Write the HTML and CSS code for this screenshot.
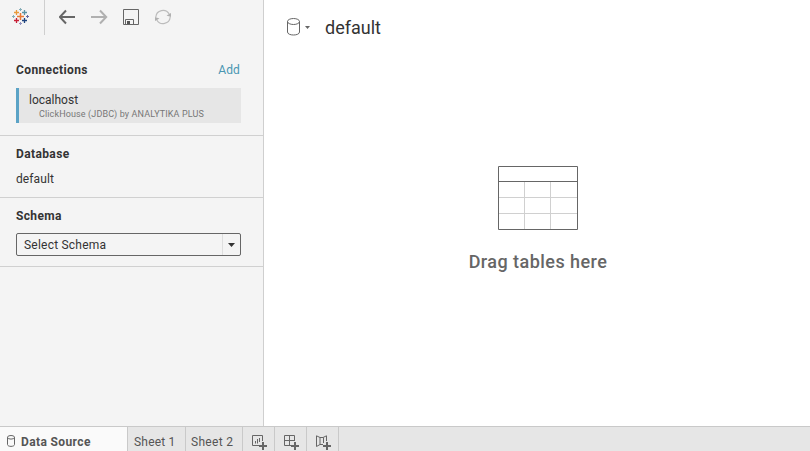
FILE: index.html
```html
<!DOCTYPE html>
<html lang="en">
<head>
<meta charset="utf-8">
<title>Data Source</title>
<link rel="stylesheet" href="styles.css">
</head>
<body>
<div class="workspace">
  <aside class="sidebar">
    <div class="toolbar">
      <svg class="logo" width="18" height="18" viewBox="0 0 18 18" fill="none">
        <path d="M8.5 5V12M5 8.5H12" stroke="#eb7733" stroke-width="1.5"/>
        <path d="M4.5 2V7M2 4.5H7" stroke="#e99a3c" stroke-width="1.3"/>
        <path d="M12.5 2V7M10 4.5H15" stroke="#5b92a5" stroke-width="1.3"/>
        <path d="M4.5 10V15M2 12.5H7" stroke="#c72037" stroke-width="1.3"/>
        <path d="M12.5 10V15M10 12.5H15" stroke="#1f447e" stroke-width="1.3"/>
        <path d="M8.5 0V3M7 1.5H10M1.5 7V10M0 8.5H3" stroke="#86aeb8"/>
        <path d="M15.5 7V10M14 8.5H17" stroke="#6868a0"/>
        <path d="M8.5 14V17M7 15.5H10" stroke="#9494be"/>
      </svg>
      <svg class="icon back" width="18" height="16" viewBox="0 0 18 16" fill="none" stroke="#666" stroke-width="2"><path d="M16 8H1M7 1.5.8 8 7 14.5"/></svg>
      <svg class="icon forward" width="18" height="16" viewBox="0 0 18 16" fill="none" stroke="#b0b0b0" stroke-width="2"><path d="M0 8H15M9 1.5 15.2 8 9 14.5"/></svg>
      <svg class="icon save" width="16" height="16" viewBox="0 0 16 16" fill="none" stroke="#666"><path d="M.5.5H15.5V15.5H.5ZM2.5 15V10.5H10.5V15"/><path d="M4 12H7V15H4Z" fill="#555" stroke="none"/></svg>
      <svg class="icon refresh" width="18" height="16" viewBox="0 0 18 16" fill="none" stroke="#bcbcbc" stroke-width="1.2"><path d="M1.8 8A7.2 7.2 0 0 1 15.2 5M16.2 8A7.2 7.2 0 0 1 2.8 11"/><path d="M12.5 6.5 17 8V4ZM1 8V12L5.5 9.5Z" fill="#b0b0b0" stroke="none"/></svg>
    </div>
    <section class="section connections">
      <div class="heading-row"><h2 class="heading t-connections">Connections</h2><a class="add">Add</a></div>
      <div class="connection">
        <div class="connection-name">localhost</div>
        <div class="connection-type">ClickHouse (JDBC) by ANALYTIKA PLUS</div>
      </div>
    </section>
    <section class="section database">
      <h2 class="heading t-database">Database</h2>
      <div class="value">default</div>
    </section>
    <section class="section schema">
      <h2 class="heading t-schema">Schema</h2>
      <div class="select"><span class="select-text">Select Schema</span><span class="select-arrow"><svg width="7" height="4" viewBox="0 0 7 4"><path d="M0 0H7L3.5 4Z" fill="#333"/></svg></span></div>
    </section>
  </aside>
  <main class="canvas">
    <header class="source">
      <svg width="14" height="18" viewBox="0 0 14 18" fill="none" stroke="#666"><ellipse cx="6.5" cy="3.5" rx="6" ry="3"/><path d="M.5 3.5V14C.5 18 12.5 18 12.5 14V3.5"/></svg>
      <svg class="source-caret" width="5" height="3" viewBox="0 0 5 3"><path d="M0 0H5L2.5 3Z" fill="#666"/></svg>
      <h1 class="source-name">default</h1>
    </header>
    <div class="dropzone">
      <svg width="80" height="64" viewBox="0 0 80 64" fill="none"><path d="M26.5 16V63M52.5 16V63M1 31.5H79M1 47.5H79" stroke="#d0d0d0"/><path d="M.5.5H79.5V63.5H.5ZM.5 15.5H79.5" stroke="#666"/></svg>
      <div class="drag-label">Drag tables here</div>
    </div>
  </main>
</div>
<footer class="tabs">
  <div class="tab active"><svg width="8" height="12" viewBox="0 0 8 12" fill="none" stroke="#666"><ellipse cx="4" cy="2.3" rx="3.5" ry="1.8"/><path d="M.5 2.3V9.5C.5 12 7.5 12 7.5 9.5V2.3"/></svg><span class="t-source">Data Source</span></div>
  <div class="tab sheet-one"><span>Sheet 1</span></div>
  <div class="tab sheet-two"><span>Sheet 2</span></div>
  <div class="tab new"><svg width="16" height="16" viewBox="0 0 16 16" fill="none" stroke="#666"><path d="M7 10.5H.5V.5H10.5V6M3.5 8.5V6M5.5 8.5V4M7.5 7V3"/><path d="M11 7V15M7 11H15" stroke-width="2"/></svg></div>
  <div class="tab new"><svg width="16" height="16" viewBox="0 0 16 16" fill="none" stroke="#666"><path d="M7 10.5H.5V.5H10.5V6M5.5.5V10.5M.5 5.5H10.5"/><path d="M11 7V15M7 11H15" stroke-width="2"/></svg></div>
  <div class="tab new"><svg width="16" height="16" viewBox="0 0 16 16" fill="none" stroke="#666"><path d="M7 9.5H4L.5 11.5V.8L4 2.5H7L10.5.8V6M4 2.5V9.5M7.5 2.5V8"/><path d="M11 7V15M7 11H15" stroke-width="2"/></svg></div>
</footer>
</body>
</html>
```
FILE: styles.css
```css
* { box-sizing: border-box; }
body {
  margin: 0;
  height: 451px;
  overflow: hidden;
  display: flex;
  flex-direction: column;
  font: 12px/16px Roboto, "Liberation Sans", sans-serif;
  color: #333;
  background: #fff;
}
svg { display: block; flex: none; }
h1, h2 { margin: 0; }
.workspace { display: flex; height: 426px; }
.sidebar { width: 264px; background: #f4f4f4; border-right: 1px solid #cfcfcf; }
.toolbar { display: flex; height: 35px; }
.logo { margin: 8px 0 0 12px; }
.icon { margin-top: 9px; }
.toolbar .back { box-sizing: content-box; margin: 0 0 0 14px; padding: 9px 0 10px 14px; border-left: 1px solid #cfcfcf; }
.forward { margin-left: 14px; }
.save { margin-left: 14px; }
.refresh { margin-left: 15px; }
.section { padding: 0 22px 0 16px; border-bottom: 1px solid #d0d0d0; }
.connections { height: 101px; padding-top: 27px; }
.heading-row { display: flex; justify-content: space-between; height: 26px; }
.heading { font-size: 12px; line-height: 16px; font-weight: 700; }
.t-connections, .t-database { letter-spacing: .38px; }
.t-schema { letter-spacing: .35px; }
.add { color: #4996b2; margin-right: 1px; letter-spacing: .1px; }
.connection { height: 35px; background: #e6e6e6; border-left: 3px solid #5ba3c6; padding: 4px 0 0 10px; }
.connection-type { padding-left: 10px; font-size: 9px; line-height: 12px; letter-spacing: .13px; color: #777; white-space: nowrap; }
.database { height: 62px; padding-top: 10px; }
.value { margin-top: 9px; letter-spacing: .1px; }
.schema { height: 69px; padding-top: 10px; }
.select { display: flex; margin-top: 9px; height: 23px; border: 1px solid #666; border-radius: 2px; line-height: 22px; }
.select-text { flex: 1; padding-left: 7px; letter-spacing: .22px; }
.select-arrow { width: 18px; border-left: 1px solid #dedede; display: flex; align-items: center; justify-content: center; }
.canvas { flex: 1; }
.source { display: flex; height: 54px; align-items: center; padding-left: 23px; }
.source-caret { margin-left: 4px; }
.source-name { margin: 1px 0 0 15px; font-size: 18px; font-weight: 400; line-height: 25px; }
.dropzone { display: flex; flex-direction: column; align-items: center; padding: 112px 0 0 2px; }
.drag-label { margin-top: 20px; font-size: 18px; line-height: 24px; font-weight: 500; letter-spacing: .45px; color: #666; }
.tabs { display: flex; height: 25px; border-top: 1px solid #c9c9c9; background: #e6e6e6; color: #555; }
.tab { border-right: 1px solid #c9c9c9; line-height: 30px; padding-left: 6px; white-space: nowrap; letter-spacing: .2px; }
.active { display: flex; width: 128px; background: #fafafa; font-weight: 700; gap: 6px; padding-left: 7px; letter-spacing: .38px; }
.active svg { margin-top: 8px; }
.sheet-one { width: 58px; }
.sheet-two { width: 57px; padding-left: 5px; letter-spacing: .3px; }
.new { width: 32px; padding: 8px 0 0 9px; }
```
